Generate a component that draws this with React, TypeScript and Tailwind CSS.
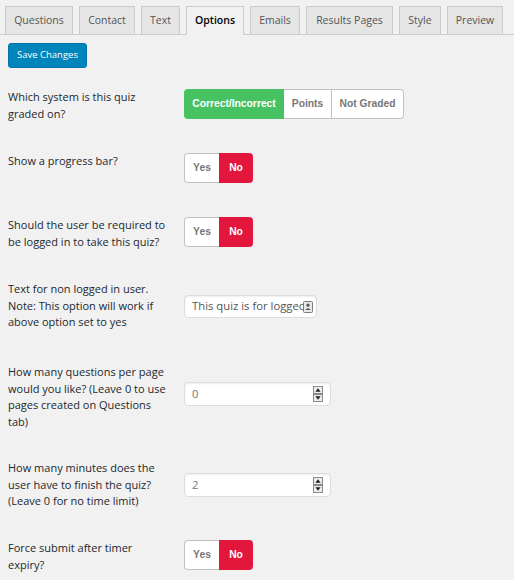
import React from "react";

const tabs: { name: string; w: string; active?: boolean }[] = [
  { name: "Questions", w: "w-[68px]" },
  { name: "Contact", w: "w-[56px]" },
  { name: "Text", w: "w-[39px]" },
  { name: "Options", w: "w-[58px]", active: true },
  { name: "Emails", w: "w-[50px]" },
  { name: "Results Pages", w: "w-[87px]" },
  { name: "Style", w: "w-[42px]" },
  { name: "Preview", w: "w-[56px]" },
];

function Label({ lines }: { lines: string[] }) {
  return (
    <div className="w-[176px] flex-none text-[11px] leading-[16.5px] text-[#23282d] font-['Open_Sans',sans-serif]">
      {lines.map((l) => (
        <div key={l} className="whitespace-nowrap">
          {l}
        </div>
      ))}
    </div>
  );
}

function Toggle() {
  return (
    <div className="flex h-[30px] font-['Liberation_Sans',Arial,sans-serif] text-[10.3px] font-bold">
      <div className="w-[35px] flex items-center justify-center bg-white border border-r-0 border-[#c2c2c2] rounded-l-[4px] text-[#777]">
        Yes
      </div>
      <div className="w-[34px] flex items-center justify-center bg-[#e2173b] rounded-r-[4px] text-white">
        No
      </div>
    </div>
  );
}

function Spinner() {
  return (
    <svg width="10" height="16" viewBox="0 0 10 16" className="flex-none">
      <rect x="0.5" y="0.5" width="9" height="7" fill="#ececec" stroke="#8a8a8a" />
      <rect x="0.5" y="8.5" width="9" height="7" fill="#ececec" stroke="#8a8a8a" />
      <path d="M5 2.2 L7.6 5.8 H2.4 Z" fill="#222" />
      <path d="M5 13.8 L7.6 10.2 H2.4 Z" fill="#222" />
    </svg>
  );
}

function NumberInput({ value }: { value: string }) {
  return (
    <div className="w-[147px] h-[24px] bg-white border border-[#dcdcdc] rounded-[4px] shadow-[inset_0_1px_2px_rgba(0,0,0,0.07)] flex items-center pl-[7px] pr-[7px] font-['Open_Sans',sans-serif] text-[11.3px] text-[#777]">
      <span className="flex-1">{value}</span>
      <Spinner />
    </div>
  );
}

export default function App() {
  return (
    <div className="w-[514px] min-h-[580px] bg-[#f1f1f1] overflow-hidden">
      {/* Tabs */}
      <div className="pt-[6px] pl-[5px] flex gap-[6px] border-b border-[#cccccc] font-['Open_Sans',sans-serif] text-[10.5px]">
        {tabs.map((t) =>
          t.active ? (
            <div
              key={t.name}
              className={`${t.w} h-[29px] -mb-px flex items-center justify-center border border-b-0 border-[#cccccc] bg-[#f1f1f1] text-black font-semibold`}
            >
              {t.name}
            </div>
          ) : (
            <div
              key={t.name}
              className={`${t.w} h-[28px] flex items-center justify-center border border-b-0 border-[#cccccc] bg-[#e5e5e5] text-[#555]`}
            >
              {t.name}
            </div>
          )
        )}
      </div>

      {/* Save button */}
      <div className="pl-[8px] pt-[8px]">
        <div className="w-[79px] h-[25px] flex items-center justify-center bg-[#0085ba] rounded-[3px] text-white text-[9.5px] font-['Open_Sans',sans-serif] border border-[#0073aa]">
          Save Changes
        </div>
      </div>

      {/* Rows */}
      <div className="pl-[8px] pt-[21px]">
        <div className="flex items-start h-[64px]">
          <Label lines={["Which system is this quiz", "graded on?"]} />
          <div className="flex h-[30px] font-['Liberation_Sans',Arial,sans-serif] text-[10.3px] font-bold">
            <div className="w-[100px] flex items-center justify-center bg-[#46c263] rounded-l-[4px] text-white">
              Correct/Incorrect
            </div>
            <div className="w-[48px] flex items-center justify-center bg-white border-y border-r border-[#c2c2c2] text-[#777]">
              Points
            </div>
            <div className="w-[72px] flex items-center justify-center bg-white border-y border-r border-[#c2c2c2] rounded-r-[4px] text-[#777]">
              Not Graded
            </div>
          </div>
        </div>

        <div className="flex items-start h-[64px]">
          <Label lines={["Show a progress bar?"]} />
          <Toggle />
        </div>

        <div className="flex items-start h-[64px]">
          <Label lines={["Should the user be required to", "be logged in to take this quiz?"]} />
          <Toggle />
        </div>

        <div className="flex items-start h-[83px]">
          <Label
            lines={["Text for non logged in user.", "Note: This option will work if", "above option set to yes"]}
          />
          <div className="relative mt-[14px] w-[133px] h-[23px] bg-white border border-[#dcdcdc] rounded-[4px] shadow-[inset_0_1px_2px_rgba(0,0,0,0.07)] flex items-center pl-[7px] font-['Open_Sans',sans-serif] text-[11.3px] text-[#555]">
            <span className="whitespace-nowrap">This quiz is for logged</span>
            <svg width="10" height="12" viewBox="0 0 10 12" className="absolute right-[3px] top-[5px]">
              <rect x="0.5" y="0.5" width="9" height="11" rx="1" fill="#e9e9e9" stroke="#7a7a7a" />
              <circle cx="5" cy="4.2" r="1.6" fill="#555" />
              <path d="M2.2 9 Q5 5.6 7.8 9 Z" fill="#555" />
            </svg>
          </div>
        </div>

        <div className="flex items-start h-[96px]">
          <Label
            lines={[
              "How many questions per page",
              "would you like? (Leave 0 to use",
              "pages created on Questions",
              "tab)",
            ]}
          />
          <div className="mt-[18px]">
            <NumberInput value="0" />
          </div>
        </div>

        <div className="flex items-start h-[80px]">
          <Label
            lines={["How many minutes does the", "user have to finish the quiz?", "(Leave 0 for no time limit)"]}
          />
          <div className="mt-[13px]">
            <NumberInput value="2" />
          </div>
        </div>

        <div className="flex items-start h-[40px]">
          <Label lines={["Force submit after timer", "expiry?"]} />
          <Toggle />
        </div>
      </div>
    </div>
  );
}
